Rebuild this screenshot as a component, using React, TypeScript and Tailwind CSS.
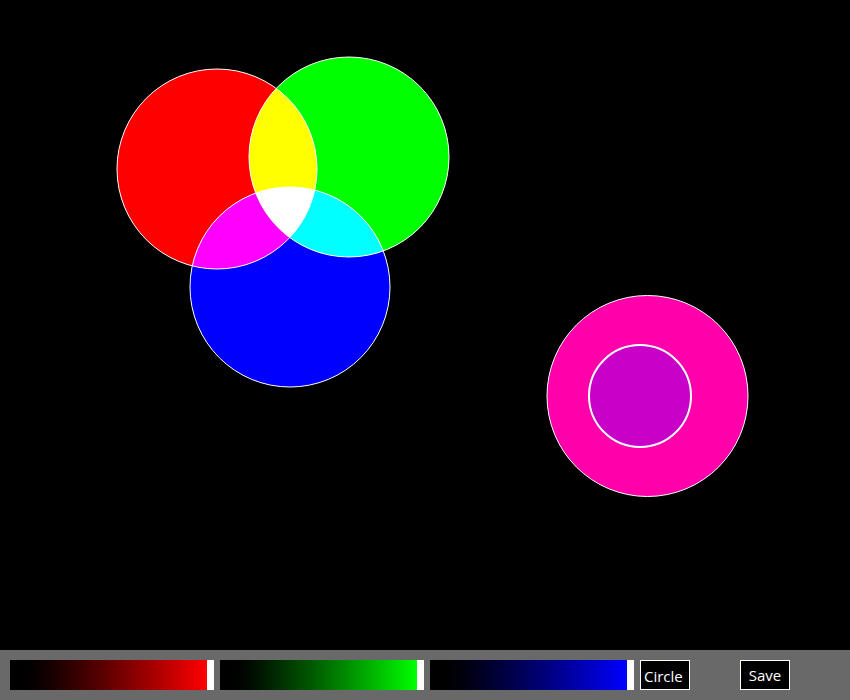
import React from "react";

type Disc = { cx: number; cy: number; r: number; fill: string };

const discs: Disc[] = [
  { cx: 217, cy: 169, r: 100, fill: "#ff0000" },
  { cx: 349, cy: 157, r: 100, fill: "#00ff00" },
  { cx: 290, cy: 287, r: 100, fill: "#0000ff" },
];

function Slider({ to }: { to: string }) {
  return (
    <div className="flex h-[30px] w-[204px]">
      <div className={`flex-1 bg-gradient-to-r from-black ${to}`} />
      <div className="w-[7px] bg-white" />
    </div>
  );
}

export default function App() {
  return (
    <div className="flex h-[700px] w-[850px] flex-col bg-black font-['Open_Sans',sans-serif]">
      <div className="h-[650px] bg-black">
        <svg width="850" height="650" viewBox="0 0 850 650" className="block">
          <g style={{ isolation: "isolate" }}>
            {discs.map((d, i) => (
              <g key={i} style={{ mixBlendMode: "screen" }}>
                <circle cx={d.cx} cy={d.cy} r={d.r} fill={d.fill} stroke="#ffffff" strokeWidth={1} />
              </g>
            ))}
          </g>
          <circle cx={647.5} cy={396} r={100.5} fill="#ff00aa" stroke="#ffffff" strokeWidth={1} />
          <circle cx={640} cy={396} r={51} fill="#c800c8" stroke="#ffffff" strokeWidth={2} />
        </svg>
      </div>
      <div className="flex h-[50px] items-center gap-[6px] bg-[#696969] px-[10px]">
        <Slider to="to-[#ff0000]" />
        <Slider to="to-[#00ff00]" />
        <Slider to="to-[#0000ff]" />
        <button className="flex h-[30px] w-[50px] items-center justify-start border border-white bg-black pl-[3px] pt-[2px] text-[15px] leading-none text-white">
          Circle
        </button>
        <button className="ml-[44px] flex h-[30px] w-[50px] items-center justify-center border border-white bg-black text-[15px] leading-none text-white">
          Save
        </button>
      </div>
    </div>
  );
}
